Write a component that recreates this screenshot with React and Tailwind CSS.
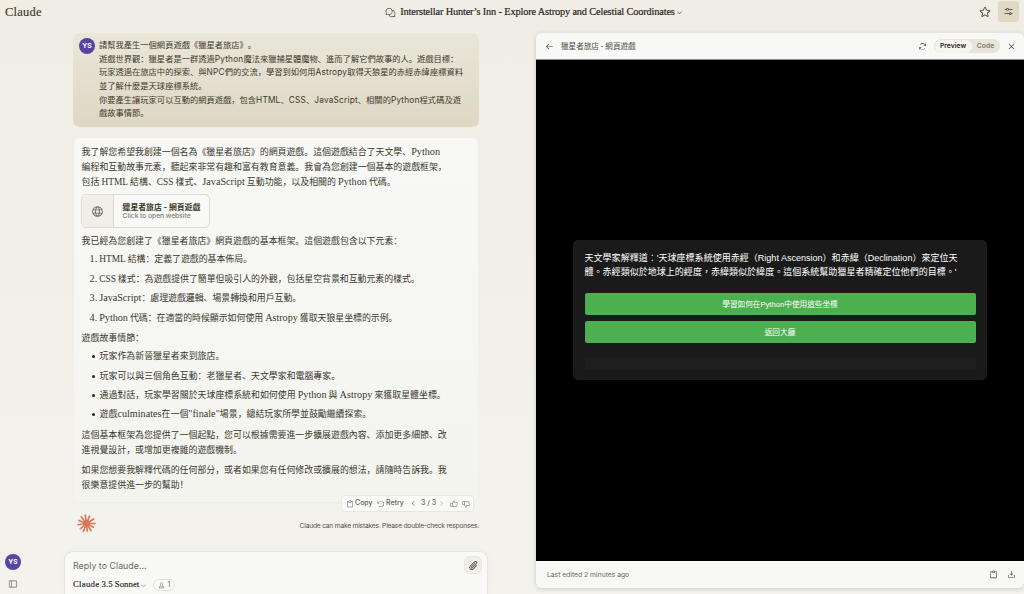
import React from "react";
import {
  PiChatsCircle, PiCaretDown, PiStar, PiSlidersHorizontal, PiArrowLeft, PiArrowsClockwise, PiX,
  PiGlobe, PiClipboard, PiArrowCounterClockwise, PiCaretLeft, PiCaretRight, PiThumbsUp,
  PiThumbsDown, PiPaperclip, PiSidebarSimple, PiFlask, PiDownloadSimple,
} from "react-icons/pi";

const SERIF = "font-['Liberation_Serif','Noto_Sans_CJK_SC',serif]";
const SANS = "font-['Inter','Noto_Sans_CJK_SC',sans-serif]";

// Sets Latin runs at their own size beside the Chinese text; acronyms run a little smaller.
function Mixed({ children }) {
  return children.split(/([A-Za-z"]+|\d\.)/).map((part, i) => {
    if (i % 2 === 0) return part;
    const size = /^[A-Z]+$/.test(part) ? "text-[9.4px]" : "text-[10.2px]";
    return <span key={i} className={`${size} leading-none`}>{part}</span>;
  });
}

function Lines({ lines, className = "" }) {
  return (
    <p className={className}>
      {lines.map((line) => (
        <span key={line} className="block whitespace-nowrap"><Mixed>{line}</Mixed></span>
      ))}
    </p>
  );
}

function Avatar() {
  return (
    <div className="flex size-4 shrink-0 items-center justify-center rounded-full bg-[#5645a4] pt-px text-[6.8px] font-bold text-white">
      YS
    </div>
  );
}

const RAYS = [
  [0, 9], [28, 8.4], [58, 9], [84, 8], [112, 9], [140, 8.6], [172, 9], [202, 8.6], [232, 9], [262, 9], [292, 8.4], [328, 9],
];

function Burst() {
  return (
    <svg viewBox="-10 -10 20 20" className="mt-[2px] size-[19px]" stroke="#d97757" strokeWidth="1.7" strokeLinecap="round">
      {RAYS.map(([a, r]) => (
        <line key={a} x1="0" y1="0" x2={r} y2="0" transform={`rotate(${a})`} />
      ))}
      <circle r="3.4" fill="#d97757" stroke="none" />
    </svg>
  );
}

function Header() {
  return (
    <header className="flex h-[33px] shrink-0 items-start justify-between pl-[5px] pr-[5px]">
      <div className="w-[184px] pt-[4px] font-['Liberation_Serif',serif] text-[12.5px] leading-4 tracking-[0.25px] text-[#3d3929] [-webkit-text-stroke:0.15px_#3d3929]">Claude</div>
      <div className="ml-[44px] flex h-6 items-center text-[#29261b]">
        <PiChatsCircle className="mr-[4px] size-[11px] text-[#535146]" />
        <h1 className="whitespace-nowrap font-['Liberation_Serif',serif] text-[10.3px] font-medium tracking-[-0.14px] [-webkit-text-stroke:0.2px_#29261b]">
          Interstellar Hunter’s Inn - Explore Astropy and Celestial Coordinates
        </h1>
        <PiCaretDown className="ml-[1px] size-[7px]" />
      </div>
      <div className="flex w-[184px] items-center justify-end gap-[7px] pt-[1px]">
        <PiStar className="size-[12px] text-[#3d3929]" />
        <div className="flex size-[21px] items-center justify-center rounded-[3px] bg-[#dfd8c5]">
          <PiSlidersHorizontal className="size-[11px] text-[#3d3929]" />
        </div>
      </div>
    </header>
  );
}

const USER_LINES = [
  "請幫我產生一個網頁遊戲《獵星者旅店》。",
  "遊戲世界觀：獵星者是一群透過Python魔法來獵捕星體魔物、進而了解它們故事的人。遊戲目標：",
  "玩家透過在旅店中的探索、與NPC們的交流，學習到如何用Astropy取得天狼星的赤經赤緯座標資料",
  "並了解什麼是天球座標系統。",
  "你要產生讓玩家可以互動的網頁遊戲，包含HTML、CSS、JavaScript、相關的Python程式碼及遊",
  "戲故事情節。",
];

function UserMessage() {
  return (
    <div className="flex h-[94px] w-[406px] gap-[4px] rounded-[7px] bg-linear-to-b from-[#e9e6da] to-[#ded7c3] pl-[6px] pt-[5px]">
      <Avatar />
      <div className="pt-px text-[8.28px] leading-[13.65px] text-[#3d3929]">
        {USER_LINES.map((l) => (
          <div key={l} className="whitespace-nowrap">
            {l.split(/([A-Za-z]+)/).map((part, i) =>
              i % 2 ? <span key={i} className="tracking-[0.2px]">{part}</span> : part
            )}
          </div>
        ))}
      </div>
    </div>
  );
}

const ELEMENTS = [
  "1. HTML 結構：定義了遊戲的基本佈局。",
  "2. CSS 樣式：為遊戲提供了簡單但吸引人的外觀，包括星空背景和互動元素的樣式。",
  "3. JavaScript：處理遊戲邏輯、場景轉換和用戶互動。",
  "4. Python 代碼：在適當的時候顯示如何使用 Astropy 獲取天狼星坐標的示例。",
];

const STORY = [
  "玩家作為新晉獵星者來到旅店。",
  "玩家可以與三個角色互動：老獵星者、天文學家和電腦專家。",
  "通過對話，玩家學習關於天球座標系統和如何使用 Python 與 Astropy 來獲取星體坐標。",
  "遊戲culminates在一個\"finale\"場景，總結玩家所學並鼓勵繼續探索。",
];

function AssistantMessage() {
  return (
    <div className="relative mt-[10px] h-[366px] w-[406px] rounded-[7px] border border-[#eeede7] bg-linear-to-b from-[#f8f8f6] to-[#f4f4ef] pl-[7.6px] pt-[7px]">
      <div className={`${SERIF} text-[8.91px] leading-[15px] text-[#3a382f] [word-spacing:-0.15px]`}>
        <Lines
          lines={[
            "我了解您希望我創建一個名為《獵星者旅店》的網頁遊戲。這個遊戲結合了天文學、Python",
            "編程和互動故事元素，聽起來非常有趣和富有教育意義。我會為您創建一個基本的遊戲框架，",
            "包括 HTML 結構、CSS 樣式、JavaScript 互動功能，以及相關的 Python 代碼。",
          ]}
        />
        <div className={`${SANS} mt-[4px] -ml-[1px] flex h-[34px] w-[129px] overflow-hidden rounded-[5px] border border-[#dcdad1] bg-[#f9f9f7]`}>
          <div className="flex w-8 items-center justify-center border-r border-[#dcdad1] bg-[#f0eee6]">
            <PiGlobe className="size-[13px] text-[#656358]" />
          </div>
          <div className="flex flex-col justify-center pl-[9px]">
            <div className="whitespace-nowrap text-[7.85px] font-bold leading-[10px] text-[#3d3929]">獵星者旅店 - 網頁遊戲</div>
            <div className="whitespace-nowrap text-[6.7px] font-medium leading-[9px] text-[#7d7b70]">Click to open website</div>
          </div>
        </div>
        <Lines className="mt-[6px]" lines={["我已經為您創建了《獵星者旅店》網頁遊戲的基本框架。這個遊戲包含以下元素："]} />
        <ol className="mt-[3.4px] flex flex-col gap-[4.4px] pl-[8px] tracking-[-0.03px]">
          {ELEMENTS.map((t) => <li key={t} className="h-[15px] whitespace-nowrap"><Mixed>{t}</Mixed></li>)}
        </ol>
        <Lines className="mt-[5.6px]" lines={["遊戲故事情節："]} />
        <ul className="mt-[3px] flex flex-col gap-[4.4px] pl-[10px]">
          {STORY.map((t) => (
            <li key={t} className="flex h-[15px] items-center whitespace-nowrap">
              <span className="mr-[5px] size-[3px] rounded-full bg-[#29261b]" />
              <span><Mixed>{t}</Mixed></span>
            </li>
          ))}
        </ul>
        <Lines
          className="mt-[6px]"
          lines={["這個基本框架為您提供了一個起點，您可以根據需要進一步擴展遊戲內容、添加更多細節、改", "進視覺設計，或增加更複雜的遊戲機制。"]}
        />
        <Lines
          className="mt-[5px]"
          lines={["如果您想要我解釋代碼的任何部分，或者如果您有任何修改或擴展的想法，請隨時告訴我。我", "很樂意提供進一步的幫助！"]}
        />
      </div>
      <div className="absolute right-[4px] -bottom-[10px] flex h-[17px] w-[133px] items-center rounded-[4px] border border-[#e8e6df] bg-[#f9f9f7] pl-[4px] text-[7px] font-medium text-[#656358]">
        <PiClipboard className="size-[8px] shrink-0" />
        <span className="ml-[1px] w-[22px]">Copy</span>
        <PiArrowCounterClockwise className="size-[8px] shrink-0" />
        <span className="ml-[1px] w-[24px]">Retry</span>
        <PiCaretLeft className="size-[7px] shrink-0" />
        <span className="ml-[4px] w-[17px] whitespace-nowrap">3 / 3</span>
        <PiCaretRight className="size-[7px] shrink-0 text-[#a8a69c]" />
        <PiThumbsUp className="ml-[5px] size-[8px] shrink-0" />
        <PiThumbsDown className="ml-[4px] size-[8px] shrink-0" />
      </div>
    </div>
  );
}

function Composer() {
  return (
    <div className="mt-auto flex h-[43px] w-[424px] -ml-[9px] items-start justify-between rounded-t-[9px] border border-b-0 border-[#e6e4dc] bg-[#f9f9f7] pl-[8px] pr-[5px] pt-[4px] shadow-[0_1px_8px_rgba(0,0,0,0.04)]">
      <div>
        <div className="h-[18px] text-[8.9px] leading-[19px] text-[#6b695d]">Reply to Claude...</div>
        <div className="mt-[5px] flex h-[12px] items-center text-[#29261b]">
          <span className="w-[66px] whitespace-nowrap font-['Liberation_Serif',serif] text-[8.8px] [-webkit-text-stroke:0.15px_#29261b]"><span className="tracking-[0.25px]">Claude</span> 3.5 Sonnet</span>
          <PiCaretDown className="ml-[1px] size-[7px] text-[#7d7b70]" />
          <span className="ml-[6px] flex h-[12px] w-[22px] items-center justify-center gap-[3px] rounded-full border border-[#e3e1d9] text-[7px] text-[#6b695d]">
            <PiFlask className="size-[7px]" />1
          </span>
        </div>
      </div>
      <div className="flex size-[18px] items-center justify-center rounded-[6px] border border-[#e9e7df] bg-[#f0eee8]">
        <PiPaperclip className="size-[11px] text-[#3d3929]" />
      </div>
    </div>
  );
}

function Artifact() {
  return (
    <section className="flex h-[555px] w-[488px] flex-col overflow-hidden rounded-[6px] bg-[#f8f8f6] shadow-[0_1px_5px_rgba(0,0,0,0.16)]">
      <div className="flex h-[26px] shrink-0 items-center pl-[9px] pr-[8px] text-[#3d3929]">
        <PiArrowLeft className="size-[9px]" />
        <div className={`${SERIF} ml-[7px] whitespace-nowrap pt-px text-[7.6px] text-[#535146]`}>獵星者旅店 - 網頁遊戲</div>
        <PiArrowsClockwise className="ml-auto size-[9px]" />
        <div className="ml-[7px] flex h-[14px] w-[66px] items-center rounded-full bg-[#e8e5d8] p-[0.5px] text-[6.8px] font-semibold">
          <span className="flex h-[13px] w-[37px] items-center justify-center rounded-full bg-[#f5f4ef] pt-px text-[#29261b]">Preview</span>
          <span className="flex-1 pt-px text-center text-[#7d7b70]">Code</span>
        </div>
        <PiX className="ml-[7px] size-[9px]" />
      </div>
      <div className="flex h-[502px] shrink-0 items-center justify-center border-t border-[#888] bg-black">
        <div className="mb-px h-[140px] w-[414px] rounded-[5px] bg-[#1a1a1a] px-[11.5px] pt-[12px] font-['Liberation_Sans','Noto_Sans_CJK_TC',sans-serif] text-white">
          <p className="whitespace-nowrap text-[9.04px] leading-[13.5px]">
            天文學家解釋道：'天球座標系統使用赤經（Right Ascension）和赤緯（Declination）來定位天<br />
            體。赤經類似於地球上的經度，赤緯類似於緯度。這個系統幫助獵星者精確定位他們的目標。'
          </p>
          <div className="mt-[13.5px] flex flex-col gap-[5.5px] text-[7.65px]">
            <button className="h-[22.5px] rounded-[2px] bg-[#4caf50] pt-[2px]">學習如何在Python中使用這些坐標</button>
            <button className="h-[22.5px] rounded-[2px] bg-[#4caf50] pt-[2px]">返回大廳</button>
          </div>
          <div className="mt-[13.5px] h-[12px] rounded-[2px] bg-[#1e1e1e]" />
        </div>
      </div>
      <div className="flex flex-1 items-center gap-[9px] pl-[11px] pr-[8px] text-[6.75px] text-[#6b695d]">
        <span className="mr-auto pt-[1.5px]">Last edited 2 minutes ago</span>
        <PiClipboard className="size-[9px] text-[#3d3929]" />
        <PiDownloadSimple className="size-[9px] text-[#3d3929]" />
      </div>
    </section>
  );
}

export default function App() {
  return (
    <div className={`${SANS} flex h-[594px] w-[1024px] flex-col overflow-hidden bg-linear-to-b from-[#f0ede4] to-[#f3f2ed] [text-spacing-trim:space-all]`}>
      <Header />
      <div className="flex min-h-0 flex-1">
        <aside className="flex w-[73px] flex-col items-start justify-end gap-[9px] pb-[5px] pl-[5px]">
          <Avatar />
          <PiSidebarSimple className="ml-[3px] size-[10px] text-[#6b695d]" />
        </aside>
        <main className="flex w-[463px] flex-col">
          <UserMessage />
          <AssistantMessage />
          <div className="mt-[9px] flex w-[406px] items-center justify-between pl-[4px]">
            <Burst />
            <span className="mt-[8px] text-[6.7px] tracking-[-0.22px] text-[#535146]">Claude can make mistakes. Please double-check responses.</span>
          </div>
          <Composer />
        </main>
        <Artifact />
      </div>
    </div>
  );
}
